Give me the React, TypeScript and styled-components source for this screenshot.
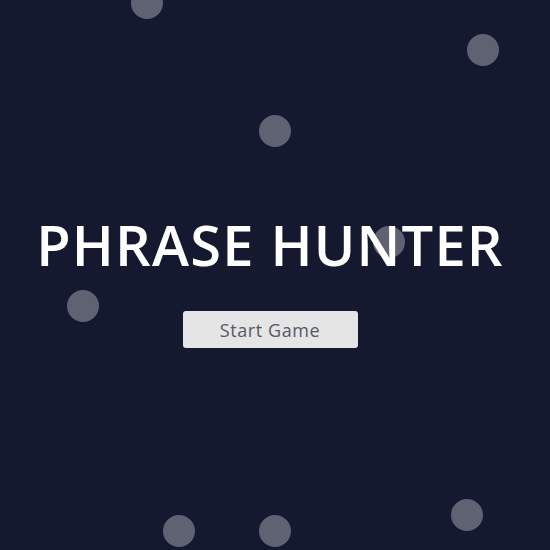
import React from "react";
import styled, { createGlobalStyle } from "styled-components";

const Global = createGlobalStyle`
  html, body { margin: 0; padding: 0; background: #141930; }
  body { font-family: "Open Sans", "Noto Sans", sans-serif; }
`;

const Screen = styled.div`
  position: relative;
  width: 540px;
  height: 550px;
  overflow: hidden;
  background: #141930;
  display: flex;
  flex-direction: column;
  align-items: center;
`;

const Title = styled.h1`
  margin: 214px 0 0;
  font-family: "Open Sans", sans-serif;
  font-weight: 600;
  font-size: 56px;
  line-height: 60px;
  letter-spacing: 1.2px;
  color: #ffffff;
  white-space: nowrap;
`;

const StartButton = styled.button`
  margin-top: 37px;
  width: 175px;
  height: 37px;
  border: none;
  border-radius: 3px;
  background: #e5e5e5;
  color: #555a62;
  font-family: "Open Sans", sans-serif;
  font-size: 18px;
  letter-spacing: 0.6px;
  cursor: pointer;
`;

const Bubble = styled.span`
  position: absolute;
  width: 32px;
  height: 32px;
  border-radius: 50%;
  background: rgba(255, 255, 255, 0.32);
  pointer-events: none;
`;

const bubbles = [
  [147, 3],
  [483, 50],
  [275, 131],
  [389, 242],
  [83, 306],
  [179, 531],
  [275, 531],
  [467, 515],
];

export default function App() {
  return (
    <>
      <Global />
      <Screen>
        <Title>PHRASE HUNTER</Title>
        <StartButton>Start Game</StartButton>
        {bubbles.map(([x, y], i) => (
          <Bubble key={i} style={{ left: x - 16, top: y - 16 }} />
        ))}
      </Screen>
    </>
  );
}
